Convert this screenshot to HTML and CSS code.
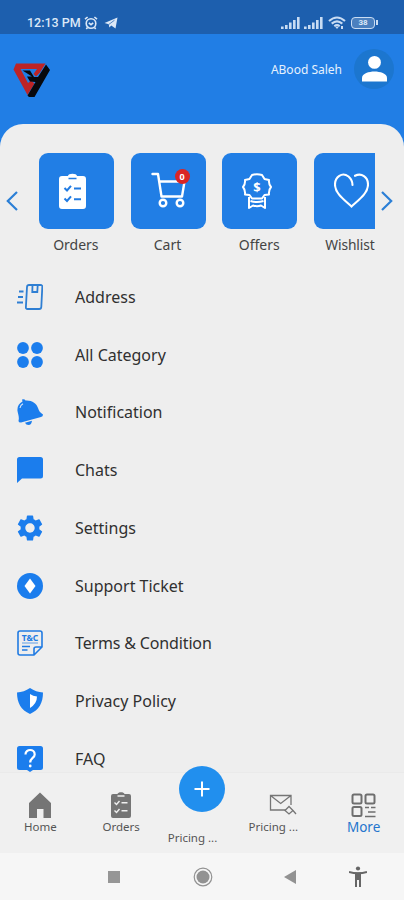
FILE: index.html
```html
<!DOCTYPE html>
<html>
<head>
	<meta charset="utf-8">
	<title>More</title>
	<link rel="stylesheet" href="styles.css">
</head>
<body>

	<div class="status">
		<span class="time">12:13 PM</span>
		<svg class="alarm" width="14" height="14" viewBox="0 0 14 14" fill="none" stroke="#dce8f7" stroke-width="1.6"><circle cx="7" cy="7.5" r="4.8"/><path d="M1 3.2L3.6 1M13 3.2L10.4 1M4.8 6.8L7 8.6L9.2 6.8M3.5 11.5L2.3 13M10.5 11.5L11.7 13"/></svg>
		<svg class="plane" width="14" height="12" viewBox="0 0 14 12"><path d="M0.5 6L13.5 0.5L11.5 11.5L7.3 8.6L5.3 10.6L4.8 7.2Z" fill="#dce8f7"/><path d="M5 7.3L10.5 3.2" stroke="#1d5fae" stroke-width="0.7"/></svg>
		<div class="signals">
			<svg width="19" height="12" viewBox="0 0 19 12" fill="#c9dcf3"><path d="M0 9.5h2.6V12H0zM4 8h2.6v4H4zM8 5.5h2.6V12H8zM12 3h2.6v9H12zM16 0h2.6v12H16z"/></svg>
			<svg width="19" height="12" viewBox="0 0 19 12" fill="#c9dcf3"><path d="M0 9.5h2.6V12H0zM4 8h2.6v4H4zM8 5.5h2.6V12H8zM12 3h2.6v9H12zM16 0h2.6v12H16z"/></svg>
			<svg class="wifi" width="18" height="14" viewBox="0 0 18 14" fill="none" stroke="#c9dcf3" stroke-width="2.1"><path d="M1 5Q9 -2 17 5M3.7 7.6Q9 3 14.3 7.6M6.3 10.2Q9 8 11.7 10.2"/><path d="M7.2 10.8h3.6L9 13z" fill="#c9dcf3" stroke="none"/><path d="M14 10v3" stroke-width="2"/></svg>
			<span class="battery">38</span>
		</div>
	</div>

	<div class="header">
		<svg class="logo" width="38" height="35" viewBox="0 0 38 35">
			<path d="M3 0.5H32.500L27 9.500L23 13.500L20.500 11L24 6H7.500L15 20L18 17.500L21.500 20.500L14.500 32L0.500 6.500Z" fill="#bd2426"/>
			<path d="M9.500 7.500H17L21 14H25L33 1.500L37 7L21.500 34H16L14.500 32.500L22.500 19L17 18.500L14 13.500H19Z" fill="#07080d"/>
		</svg>
		<span class="user">ABood Saleh</span>
		<div class="avatar">
			<svg width="25" height="26" viewBox="0 0 25 26" fill="#fff"><circle cx="12.5" cy="6.4" r="6.4"/><path d="M0 25.5V22C0 17.6 7 15.6 12.5 15.6S25 17.6 25 22V25.5Z"/></svg>
		</div>
	</div>

	<div class="panel">
		<div class="slider">
			<svg class="arrow" width="12" height="20" viewBox="0 0 12 20"><path d="M11 1L1.8 10L11 19"/></svg>
			<div class="cards">
				<div class="item">
					<div class="box">
						<svg width="27" height="36" viewBox="0 0 27 36"><path d="M3 3H9C9 0 18 0 18 3H24Q27 3 27 6V33Q27 36 24 36H3Q0 36 0 33V6Q0 3 3 3Z" fill="#fff"/><path d="M9.5 5.5H17.5" stroke="#217be2" stroke-width="1.4"/><path d="M5.5 15L8 17.5L12 12.8M5.5 25.5L8 28L12 23.3M15 15.5H22M15 26.3H22" fill="none" stroke="#217be2" stroke-width="2"/></svg>
					</div>
					<span>Orders</span>
				</div>
				<div class="item">
					<div class="box">
						<svg class="cart" width="36" height="36" viewBox="0 0 36 36" fill="none" stroke="#fff" stroke-width="2.4"><path d="M1.500 2H7L10.500 24.500H31L33.500 9.500H8.500" stroke-linejoin="round" stroke-linecap="round"/><circle cx="12" cy="31" r="3.3"/><circle cx="29" cy="31" r="3.3"/></svg>
						<span class="badge">0</span>
					</div>
					<span>Cart</span>
				</div>
				<div class="item">
					<div class="box">
						<svg class="offer" width="30" height="36" viewBox="0 0 30 36" fill="none" stroke="#fff" stroke-width="2" stroke-linejoin="round"><path d="M10 2Q15 0.5 20 2L22.500 6L27 7Q26.500 11 29 14Q26.500 17 27 21.500L22.500 22L20 25.500H10L7.500 22L3 21.500Q3.500 17 1 14Q3.500 11 3 7L7.500 6Z"/><path d="M7 24V35L11 32.500Q15 34 19 32.500L23 35V24M8.500 28Q15 30 21.500 28"/><text x="15" y="18.500" text-anchor="middle" class="dollar">$</text></svg>
					</div>
					<span>Offers</span>
				</div>
				<div class="item">
					<div class="box">
						<svg class="heart" width="35" height="35" viewBox="0 0 35 35" fill="none" stroke="#fff" stroke-width="2.1" stroke-linecap="round"><path d="M18.500 12Q18.500 7 14.500 3.500C8 -1.500 1 4 1 11.500C1 21 12 28 17.500 33.500C23 28 34 21 34 11.500C34 4 27.500 -0.500 21 2.800"/></svg>
					</div>
					<span class="wish">Wishlist</span>
				</div>
			</div>
			<svg class="arrow" width="12" height="20" viewBox="0 0 12 20"><path d="M1 1L10.200 10L1 19"/></svg>
		</div>

		<div class="menu">
			<div class="row">
				<svg width="26" height="26" viewBox="0 0 26 26" fill="none" stroke="#2f7fd3" stroke-width="1.800"><path d="M12 1H23.500Q25.500 1 25.300 3L24.300 23Q24.200 25 22.200 25H10.500Q8.700 25 8.900 23L10 3Q10.200 1 12 1Z"/><path d="M15.500 1L15.300 8H20.300L20.700 1"/><path d="M2 7.500H6.500M1 13H6M0 18.500H6" stroke-width="2"/></svg>
				<span>Address</span>
			</div>
			<div class="row">
				<svg width="26" height="26" viewBox="0 0 26 26" fill="#1b7ded"><circle cx="6" cy="6" r="5.900"/><circle cx="20" cy="6" r="5.900"/><circle cx="6" cy="20" r="5.900"/><circle cx="20" cy="20" r="5.900"/></svg>
				<span>All Category</span>
			</div>
			<div class="row">
				<svg width="26" height="26" viewBox="0 0 26 26" fill="#1b7ded"><path d="M5 0.500Q7.500 -0.500 8.500 1.500C15 1 19.500 4.500 21 9C22 12 23 13.500 26 15.500Q26 17.500 24 18L4 23.500Q1.500 23.500 1.500 22C2.500 18 1 15 0.500 12C0 7.500 2 4.500 5.500 2.500Z"/><path d="M8 23.700L15 21.800Q14.500 26 11.500 26Q9 26 8 23.700Z"/><path d="M3 9Q3.500 6 6 4.800" stroke="#d7e7fa" stroke-width="1.100" fill="none"/></svg>
				<span>Notification</span>
			</div>
			<div class="row">
				<svg width="26" height="26" viewBox="0 0 26 26" fill="#1b7ded"><path d="M2.500 0H23.500Q26 0 26 2.500V19Q26 21.500 23.500 21.500H5L0 26V2.500Q0 0 2.500 0Z"/></svg>
				<span>Chats</span>
			</div>
			<div class="row">
				<svg width="26" height="26" viewBox="2.200 2 19.600 20" fill="#1b7ded"><path d="M19.140 12.940c.040-.300.060-.610.060-.940 0-.320-.020-.640-.070-.940l2.030-1.580a.490.490 0 0 0 .120-.610l-1.920-3.320a.488.488 0 0 0-.590-.220l-2.390.960c-.500-.380-1.030-.700-1.620-.940l-.360-2.540a.484.484 0 0 0-.480-.410h-3.840c-.240 0-.430.170-.470.410l-.360 2.540c-.590.240-1.130.570-1.620.940l-2.390-.960c-.220-.080-.470 0-.590.220L2.740 8.870c-.120.210-.080.470.120.610l2.030 1.580c-.050.300-.090.630-.090.940s.020.640.070.940l-2.030 1.580a.490.490 0 0 0-.120.610l1.920 3.320c.120.220.370.290.590.220l2.390-.960c.500.380 1.030.700 1.620.940l.360 2.540c.050.240.240.410.480.410h3.840c.240 0 .440-.170.470-.410l.360-2.540c.590-.240 1.130-.560 1.620-.940l2.390.960c.220.080.470 0 .590-.220l1.920-3.320c.120-.220.070-.470-.120-.610l-2.010-1.580zM12 15.600c-1.980 0-3.600-1.620-3.600-3.600s1.620-3.600 3.600-3.600 3.600 1.620 3.600 3.600-1.620 3.600-3.600 3.600z"/></svg>
				<span>Settings</span>
			</div>
			<div class="row">
				<svg width="26" height="26" viewBox="0 0 26 26"><circle cx="13" cy="13" r="13" fill="#1b7ded"/><path d="M13 5.500L18.500 13L13 20.500L7.500 13Z" fill="#fff"/></svg>
				<span>Support Ticket</span>
			</div>
			<div class="row">
				<svg width="26" height="26" viewBox="0 0 26 26" fill="none" stroke="#217be2" stroke-width="1.600"><path d="M3 1H23Q25 1 25 3V17L17 25H3Q1 25 1 23V3Q1 1 3 1ZM25 17H19Q17 17 17 19V25" stroke-linejoin="round"/><path d="M5 16.500H13M5 20H10.500" stroke-width="1.400"/><path d="M5 13H21" stroke-width="0.700"/><text x="13" y="10.500" text-anchor="middle" class="tc">T&amp;C</text></svg>
				<span class="terms">Terms &amp; Condition</span>
			</div>
			<div class="row">
				<svg width="26" height="26" viewBox="0 0 26 26"><path d="M13 0Q19 4 26 4.500C26 15 22 22 13 26C4 22 0 15 0 4.500Q7 4 13 0Z" fill="#1b7ded"/><path d="M13 6Q16 8 20 8.500Q20 15.500 13 20Z" fill="#fff"/></svg>
				<span>Privacy Policy</span>
			</div>
			<div class="row">
				<svg width="26" height="26" viewBox="0 0 26 26"><path d="M2.500 0H23.500Q26 0 26 2.500V21.500Q26 24 23.500 24H16L13 26L10 24H2.500Q0 24 0 21.500V2.500Q0 0 2.500 0Z" fill="#1b7ded"/><path d="M8.500 8.500C8.500 2.500 17.700 2.500 17.700 8.500C17.700 12 13.200 12 13.200 16.500" stroke="#fff" stroke-width="2.200" fill="none"/><circle cx="13.200" cy="20" r="1.400" fill="#fff"/></svg>
				<span>FAQ</span>
			</div>
		</div>
	</div>

	<div class="tabs">
		<div class="tab">
			<svg width="24" height="26" viewBox="0 0 24 26" fill="#757575"><path d="M12 0.500L23 11V26H15.500V17H9V26H1V11Z"/></svg>
			<span>Home</span>
		</div>
		<div class="tab">
			<svg width="20" height="26" viewBox="0 0 20 26"><path d="M2 2H6.500C7 -0.500 13 -0.500 13.500 2H18Q20 2 20 4V24Q20 26 18 26H2Q0 26 0 24V4Q0 2 2 2Z" fill="#757575"/><path d="M6.500 4H13.500M3.500 10.500L5.500 12.500L8.500 9M3.500 18.500L5.500 20.500L8.500 17M10.500 10.700H16.500M10.500 18.700H16.500" stroke="#f0f0f0" stroke-width="1.400" fill="none"/></svg>
			<span>Orders</span>
		</div>
		<div class="tab middle">
			<div class="plus"><svg width="16" height="16" viewBox="0 0 16 16"><path d="M8 0.500V15.500M0.500 8H15.500" stroke="#fff" stroke-width="2"/></svg></div>
			<span class="pricing">Pricing ...</span>
		</div>
		<div class="tab">
			<svg width="28" height="26" viewBox="0 0 28 26" fill="none" stroke="#757575" stroke-width="1.300"><path d="M17 18H1.500V3.500H22V13M1.500 3.500L11.700 11.500L22 3.500"/><path d="M16 18.500L20 14.500L24 18.500L20 22ZM24 18.500L27 22"/></svg>
			<span class="pricing">Pricing ...</span>
		</div>
		<div class="tab active">
			<svg width="25" height="26" viewBox="0 0 25 26" fill="none" stroke="#6e6e6e" stroke-width="2"><rect x="1.500" y="2.500" width="9" height="9" rx="1.500"/><rect x="14.500" y="2.500" width="9" height="9" rx="1.500"/><rect x="1.500" y="15" width="9" height="9" rx="1.500"/><path d="M14 15.500H18M20 15.500H24.500M17 20H24.500M14 24.500H24.500" stroke-width="1.700"/></svg>
			<span>More</span>
		</div>
	</div>

	<div class="system">
		<svg width="12" height="12" viewBox="0 0 12 12"><path d="M0 0H12V12H0Z" fill="#969696"/></svg>
		<svg class="homekey" width="20" height="20" viewBox="0 0 20 20"><circle cx="10" cy="10" r="8.800" fill="none" stroke="#929292" stroke-width="1.200"/><circle cx="10" cy="10" r="6.500" fill="#929292"/></svg>
		<svg class="backkey" width="12" height="14" viewBox="0 0 12 14"><path d="M0 7L12 0V14Z" fill="#929292"/></svg>
		<svg class="access" width="18" height="22" viewBox="0 0 18 22" fill="none" stroke="#666"><circle cx="9" cy="2.500" r="2.100" fill="#666" stroke="none"/><path d="M0 6Q9 8.500 18 6" stroke-width="2"/><path d="M6 6.500H12V21H10V14H8V21H6Z" fill="#666" stroke="none"/></svg>
	</div>

</body>
</html>
```
FILE: styles.css
```css
*{box-sizing:border-box;}
body{margin:0; width:404px; height:900px; overflow:hidden; display:flex; flex-direction:column; background-color:#217ee5; font-family:"Noto Sans", sans-serif; color:#333;}
svg{display:block; flex:none;}
.status{flex:none; height:34px; padding:11px 28px 0 27px; display:flex; align-items:center; background-color:#1d5fae; color:#dce8f7;}
.time{font-family:Roboto, sans-serif; font-size:12.5px; font-weight:500; width:53px; white-space:nowrap;}
.alarm{margin-left:4px;}
.plane{margin-left:6px;}
.signals{margin-left:auto; display:flex; align-items:center; gap:4px;}
.wifi{margin-left:1px;}
.battery{position:relative; width:24px; height:12px; margin-left:1px; margin-right:1px; border:1.5px solid #c9dcf3; border-radius:4px; font:bold 8px/9px Roboto, sans-serif; text-align:center; background-color:#4b80bf;}
.battery::after{content:""; position:absolute; right:-4px; top:2px; width:2px; height:5px; background-color:#c9dcf3;}
.header{flex:none; height:90px; padding:15px 10px 0 13px; display:flex; align-items:flex-start;}
.logo{margin-top:14px;}
.user{margin-left:auto; margin-top:12px; margin-right:12px; font-size:12px; line-height:18px; color:#e6f1fd; white-space:nowrap;}
.avatar{width:40px; height:40px; border-radius:50%; background-color:#1c76cf; display:flex; justify-content:center; align-items:center;}
.panel{flex:none; height:648px; overflow:hidden; background-color:#eee; border-radius:23px 23px 0 0;}
.slider{display:flex; align-items:flex-start; padding:29px 11px 0 6px; height:144px;}
.arrow{margin-top:38px; fill:none; stroke:#2b7fd6; stroke-width:2.2;}
.cards{width:336px; margin:0 6px 0 21px; display:flex; gap:17px; overflow:hidden; flex:none;}
.item{flex:none; width:74.7px; display:flex; flex-direction:column; align-items:center; font-size:14px; line-height:20px; color:#444; white-space:nowrap;}
.item > span{margin-right:1px;}
.item > .wish{font-size:13.8px; letter-spacing:-0.1px; margin-right:3px;}
.box{position:relative; width:75px; height:76px; margin-bottom:6px; border-radius:9px; background-color:#217ee5; display:flex; justify-content:center; align-items:center;}
.box svg{margin-right:8px;}
.box .cart{margin:0 0 2px 1px;}
.box .offer{margin:0 5px 0 0;}
.box .heart{margin:0 0 1px 0;}
.badge{position:absolute; left:44px; top:16px; width:15px; height:15px; border-radius:50%; background-color:#d92525; color:#fff; font-size:9px; font-weight:bold; line-height:15px; text-align:center;}
.dollar{font:bold 13px "Noto Sans", sans-serif; fill:#fff; stroke:none;}
.row{display:flex; align-items:center; height:57.75px; padding-left:17px; font-size:16px; color:#303030; white-space:nowrap;}
.row svg{margin-right:32px;}
.terms{letter-spacing:-0.15px;}
.tc{font:bold 8.5px "Noto Sans", sans-serif; fill:#217be2; stroke:none;}
.tabs{flex:none; height:81px; border-top:1px solid #eaeaea; background-color:#f0f0f0; display:grid; grid-template-columns:repeat(5, 1fr);}
.tab{display:flex; flex-direction:column; align-items:center; padding-top:19px; font-size:11.5px; line-height:18px; color:#555; white-space:nowrap;}
.tab .pricing{margin-right:19px;}
.middle{padding-top:0;}
.plus{width:46px; height:46px; margin-top:-7px; margin-bottom:17px; border-radius:50%; background-color:#218fee; display:flex; justify-content:center; align-items:center;}
.active{color:#2475cd; font-size:13.5px;}
.system{flex:none; height:47px; background-color:#f6f6f6; display:flex; align-items:center; padding-left:108px;}
.homekey{margin-left:73px;}
.backkey{margin-left:71px;}
.access{margin-left:53px;}
```
